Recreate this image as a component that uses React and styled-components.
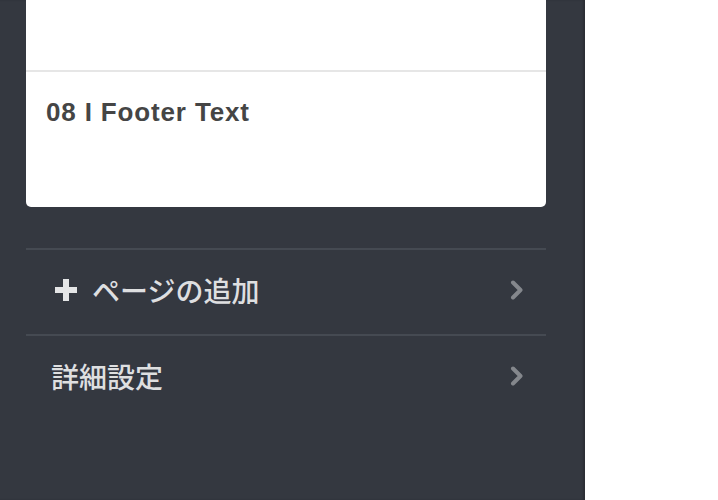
import React from "react";
import styled, { createGlobalStyle } from "styled-components";

const Global = createGlobalStyle`
  html, body { margin: 0; padding: 0; background: #ffffff; }
  body { font-family: "Liberation Sans", "Noto Sans CJK JP", Arial, sans-serif; overflow: hidden; }
`;

const Page = styled.div`
  display: flex;
  width: 718px;
  height: 500px;
  overflow: hidden;
`;

const Sidebar = styled.aside`
  width: 585px;
  height: 500px;
  background: #343840;
  box-shadow: inset -2px 0 2px rgba(0, 0, 0, 0.18);
  padding: 0 39px 0 26px;
  box-sizing: border-box;
  display: flex;
  flex-direction: column;
`;

const Card = styled.div`
  background: #ffffff;
  border-radius: 0 0 5px 5px;
  display: flex;
  flex-direction: column;
`;

const CardItem = styled.div`
  height: ${(p) => p.$h}px;
  box-sizing: border-box;
  padding: 25px 20px 0;
  border-top: ${(p) => (p.$divider ? "2px solid #e6e6e6" : "none")};
  font-size: 26px;
  font-weight: bold;
  color: #454545;
  line-height: 30px;
  letter-spacing: 0.85px;
`;

const Menu = styled.nav`
  margin-top: 41px;
  display: flex;
  flex-direction: column;
`;

const MenuRow = styled.div`
  height: 86px;
  box-sizing: border-box;
  border-top: 2px solid #454a52;
  display: flex;
  align-items: center;
  padding: 0 22px 4px 25px;
  color: #dedfe0;
  font-family: "Noto Sans CJK JP", "Liberation Sans", sans-serif;
  font-size: 28px;
  font-weight: 500;
`;

const Label = styled.span`
  flex: 1;
  display: flex;
  align-items: center;
  gap: 15px;
  line-height: 1;
`;

const PlusIcon = styled.svg`
  width: 22px;
  height: 22px;
  margin-left: 4px;
  flex: none;
`;

const Chevron = styled.svg`
  width: 14px;
  height: 20px;
  flex: none;
`;

const Blank = styled.div`
  flex: 1;
  background: #ffffff;
`;

function ChevronRight() {
  return (
    <Chevron viewBox="0 0 14 20">
      <path d="M3 2.5 L10.5 10 L3 17.5" fill="none" stroke="#84878c" strokeWidth="4" strokeLinecap="round" strokeLinejoin="round" />
    </Chevron>
  );
}

export default function App() {
  return (
    <>
      <Global />
      <Page>
        <Sidebar>
          <Card>
            <CardItem $h={70} />
            <CardItem $h={137} $divider>08 I Footer Text</CardItem>
          </Card>
          <Menu>
            <MenuRow>
              <Label>
                <PlusIcon viewBox="0 0 22 22">
                  <rect x="8" y="0" width="6" height="22" fill="#e4e5e6" />
                  <rect x="0" y="8" width="22" height="6" fill="#e4e5e6" />
                </PlusIcon>
                ページの追加
              </Label>
              <ChevronRight />
            </MenuRow>
            <MenuRow>
              <Label>詳細設定</Label>
              <ChevronRight />
            </MenuRow>
          </Menu>
        </Sidebar>
        <Blank />
      </Page>
    </>
  );
}
